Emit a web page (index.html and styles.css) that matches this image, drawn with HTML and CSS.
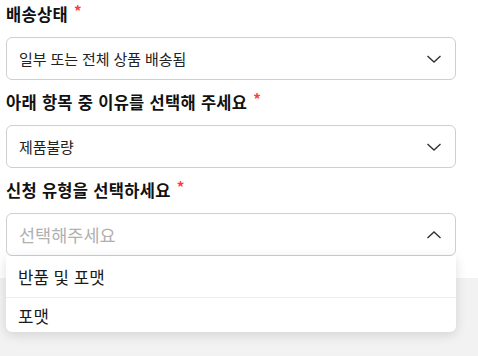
FILE: index.html
```html
<!DOCTYPE html>
<html lang="ko">
<head>
<meta charset="utf-8">
<link rel="stylesheet" href="styles.css">
</head>
<body>
<div class="page">
  <div class="form">
    <div class="field">
      <div class="label">배송상태<span class="req">*</span></div>
      <div class="select">
        <span class="value">일부 또는 전체 상품 배송됨</span>
        <svg class="chev" width="16" height="10" viewBox="0 0 16 10"><path d="M1.5 2 L8 8 L14.5 2" fill="none" stroke="#333" stroke-width="1.4"/></svg>
      </div>
    </div>
    <div class="field">
      <div class="label">아래 항목 중 이유를 선택해 주세요<span class="req">*</span></div>
      <div class="select">
        <span class="value">제품불량</span>
        <svg class="chev" width="16" height="10" viewBox="0 0 16 10"><path d="M1.5 2 L8 8 L14.5 2" fill="none" stroke="#333" stroke-width="1.4"/></svg>
      </div>
    </div>
    <div class="field">
      <div class="label">신청 유형을 선택하세요<span class="req">*</span></div>
      <div class="select-wrap">
        <div class="select open">
          <span class="value placeholder">선택해주세요</span>
          <svg class="chev" width="16" height="10" viewBox="0 0 16 10"><path d="M1.5 8 L8 2 L14.5 8" fill="none" stroke="#333" stroke-width="1.4"/></svg>
        </div>
        <ul class="menu">
          <li class="option">반품 및 포맷</li>
          <li class="option">포맷</li>
        </ul>
      </div>
    </div>
  </div>
  <div class="footer"></div>
</div>
</body>
</html>
```

FILE: styles.css
```css
html, body {
  margin: 0;
  padding: 0;
  background: #ffffff;
}
body {
  font-family: "Noto Sans CJK KR", "Noto Sans", sans-serif;
  color: #1a1a1a;
}
.page {
  width: 478px;
  height: 356px;
  display: flex;
  flex-direction: column;
  overflow: hidden;
}
.form {
  padding: 3px 22px 0 6px;
  display: flex;
  flex-direction: column;
  gap: 11px;
  height: 278px;
  box-sizing: border-box;
}
.field {
  display: flex;
  flex-direction: column;
}
.label {
  height: 22px;
  line-height: 22px;
  font-size: 16.5px;
  font-weight: 700;
  letter-spacing: 0.3px;
  margin-bottom: 12px;
  color: #111;
  white-space: nowrap;
}
.req {
  display: inline-block;
  color: #ff3b3b;
  font-size: 15px;
  font-weight: 700;
  margin-left: 6px;
  line-height: 15px;
  height: 15px;
  vertical-align: top;
}
.select {
  height: 43px;
  box-sizing: border-box;
  border: 1px solid #cfcfcf;
  border-radius: 6px;
  display: flex;
  align-items: center;
  justify-content: space-between;
  padding: 0 13px 0 12px;
  background: #fff;
}
.value {
  font-size: 15px;
  letter-spacing: -0.1px;
  color: #222;
}
.placeholder {
  font-size: 17.5px;
  color: #b0b0b0;
  letter-spacing: 0;
}
.chev {
  display: block;
}
.select-wrap {
  position: relative;
}
.menu {
  position: absolute;
  left: 0;
  right: 0;
  top: 43px;
  margin: 0;
  padding: 0;
  list-style: none;
  background: #fff;
  border-radius: 0 0 6px 6px;
  box-shadow: 0 3px 12px rgba(0, 0, 0, 0.13);
  z-index: 2;
}
.option {
  height: 41px;
  line-height: 43px;
  padding-left: 12px;
  font-size: 16.8px;
  color: #1a1a1a;
}
.option + .option {
  border-top: 1px solid #eeeeee;
  height: 34px;
  line-height: 37px;
}
.footer {
  flex: 1;
  background: #f2f2f2;
}
```
